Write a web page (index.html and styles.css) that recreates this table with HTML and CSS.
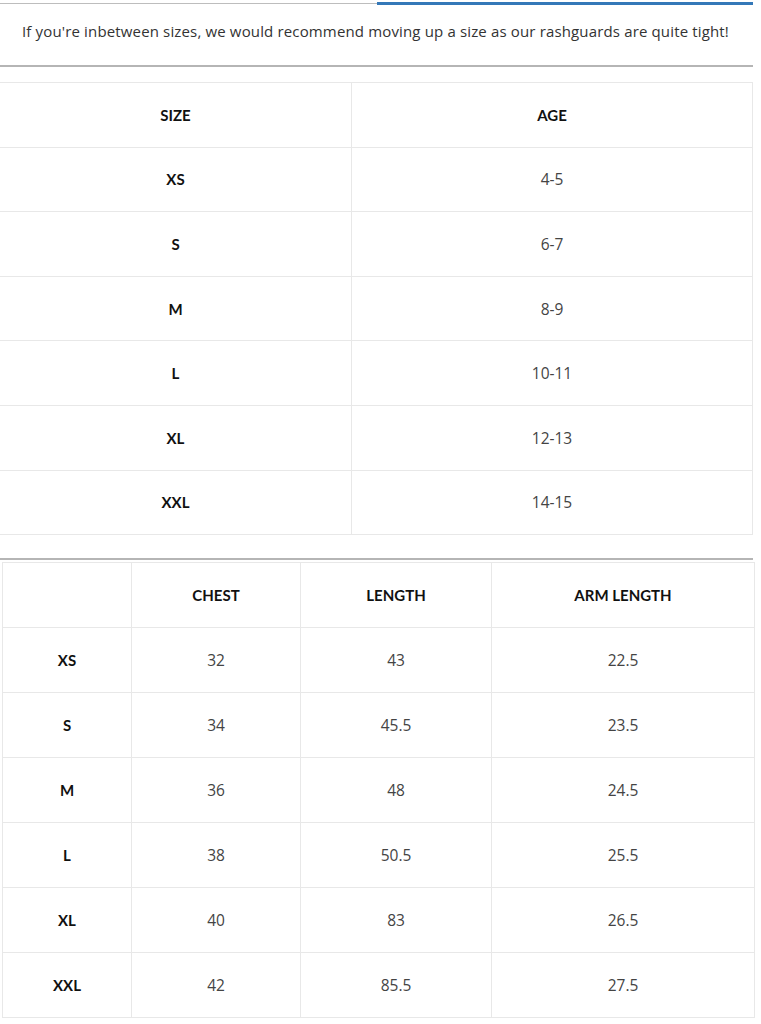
FILE: index.html
```html
<!DOCTYPE html>
<html>
<head>
<meta charset="utf-8">
<link rel="stylesheet" href="styles.css">
</head>
<body>
<div class="page">
  <div class="tabs">
    <div class="tab-line"></div>
    <div class="tab-line active"></div>
  </div>
  <p class="note">If you're inbetween sizes, we would recommend moving up a size as our rashguards are quite tight!</p>
  <div class="rule"></div>
  <table class="chart chart-age">
    <colgroup><col class="c-size"><col class="c-age"></colgroup>
    <tr><th>SIZE</th><th>AGE</th></tr>
    <tr><th>XS</th><td>4-5</td></tr>
    <tr><th>S</th><td>6-7</td></tr>
    <tr><th>M</th><td>8-9</td></tr>
    <tr><th>L</th><td>10-11</td></tr>
    <tr><th>XL</th><td>12-13</td></tr>
    <tr><th>XXL</th><td>14-15</td></tr>
  </table>
  <div class="rule rule-2"></div>
  <table class="chart chart-dims">
    <colgroup><col class="c1"><col class="c2"><col class="c3"><col class="c4"></colgroup>
    <tr><th></th><th>CHEST</th><th>LENGTH</th><th>ARM LENGTH</th></tr>
    <tr><th>XS</th><td>32</td><td>43</td><td>22.5</td></tr>
    <tr><th>S</th><td>34</td><td>45.5</td><td>23.5</td></tr>
    <tr><th>M</th><td>36</td><td>48</td><td>24.5</td></tr>
    <tr><th>L</th><td>38</td><td>50.5</td><td>25.5</td></tr>
    <tr><th>XL</th><td>40</td><td>83</td><td>26.5</td></tr>
    <tr><th>XXL</th><td>42</td><td>85.5</td><td>27.5</td></tr>
  </table>
</div>
</body>
</html>
```

FILE: styles.css
```css
* { box-sizing: border-box; }
html, body { margin: 0; padding: 0; background: #fff; }
body { font-family: "Open Sans", "Noto Sans", sans-serif; color: #333; }
.page { width: 753px; }

.tabs { display: flex; align-items: center; height: 6px; }
.tab-line { flex: 1; height: 1px; background: #bdbdbd; }
.tab-line.active { height: 3px; background: #3478b8; }

.note {
  margin: 0;
  padding: 15px 0 0 22px;
  height: 59px;
  font-size: 15px;
  letter-spacing: 0.15px;
  line-height: 20px;
  color: #333;
}

.rule { height: 2px; background: #b5b5b5; margin-bottom: 15px; }
.rule-2 { margin-top: 23px; margin-bottom: 2px; }

.chart {
  border-collapse: collapse;
  table-layout: fixed;
  text-align: center;
  font-size: 15.5px;
}
.chart th, .chart td {
  border: 1px solid #e8e8e8;
  height: 65px;
  padding: 0;
  vertical-align: middle;
}
.chart-age th, .chart-age td { height: 64.6px; }
.chart th {
  font-family: "Lato", "Open Sans", sans-serif;
  font-weight: 700;
  font-size: 15px;
  color: #111;
}
.chart td { color: #444; }

.chart-age { width: 754px; margin-left: -1px; }
.chart-age .c-size { width: 352px; }
.chart-dims { width: 752px; margin-left: 2px; }
.chart-dims .c1 { width: 129px; }
.chart-dims .c2 { width: 169px; }
.chart-dims .c3 { width: 191px; }
.chart-dims .c4 { width: 263px; }
```
